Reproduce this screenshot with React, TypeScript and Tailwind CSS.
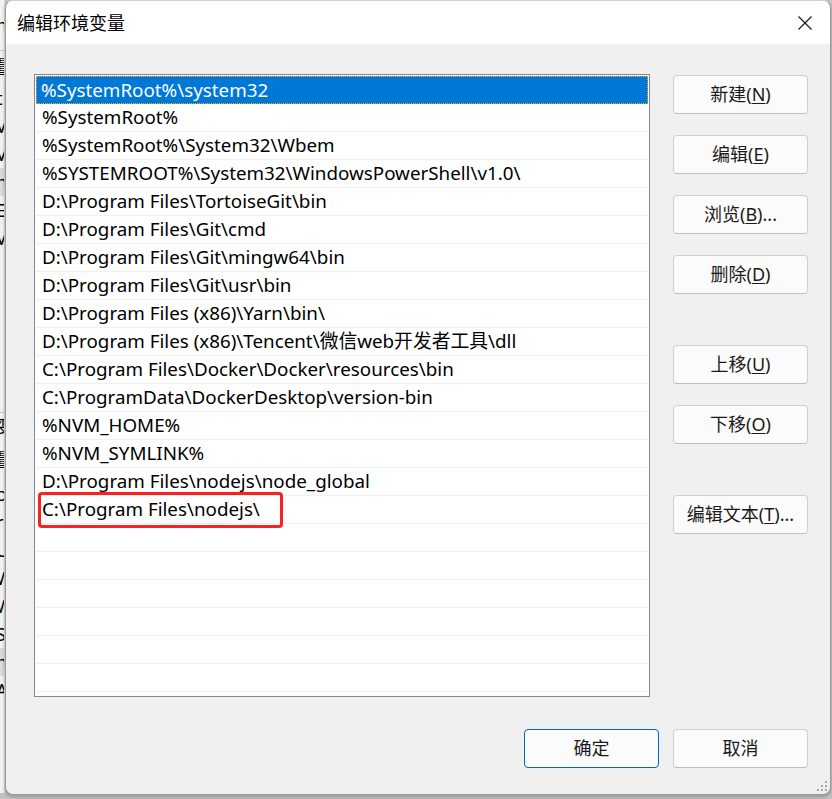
import React from "react";

const paths = [
    "%SystemRoot%\\system32",
    "%SystemRoot%",
    "%SystemRoot%\\System32\\Wbem",
    "%SYSTEMROOT%\\System32\\WindowsPowerShell\\v1.0\\",
    "D:\\Program Files\\TortoiseGit\\bin",
    "D:\\Program Files\\Git\\cmd",
    "D:\\Program Files\\Git\\mingw64\\bin",
    "D:\\Program Files\\Git\\usr\\bin",
    "D:\\Program Files (x86)\\Yarn\\bin\\",
    "D:\\Program Files (x86)\\Tencent\\微信web开发者工具\\dll",
    "C:\\Program Files\\Docker\\Docker\\resources\\bin",
    "C:\\ProgramData\\DockerDesktop\\version-bin",
    "%NVM_HOME%",
    "%NVM_SYMLINK%",
    "D:\\Program Files\\nodejs\\node_global",
    "C:\\Program Files\\nodejs\\",
];

// fragments of the window lying behind the dialog
const behind = [
    { h: "h-[50px]", t: "n", cls: "items-center" },
    { h: "h-[34px]", t: "量", cls: "items-center border-t border-[#c8c8c8]" },
    { h: "h-[28px]", t: "t", cls: "items-center" },
    { h: "h-[28px]", t: "V", cls: "items-center" },
    { h: "h-[28px]", t: "V", cls: "items-center" },
    { h: "h-[28px]", t: "nt", cls: "items-center bg-[#dcdcdc]" },
    { h: "h-[28px]", t: "EI", cls: "items-center" },
    { h: "h-[28px]", t: "V", cls: "items-center" },
    { h: "h-[160px]", t: "", cls: "items-center" },
    { h: "h-[28px]", t: "变", cls: "items-center border-t border-[#c8c8c8]" },
    { h: "h-[40px]", t: "量", cls: "items-center" },
    { h: "h-[28px]", t: "o", cls: "items-center" },
    { h: "h-[28px]", t: "ri", cls: "items-center" },
    { h: "h-[28px]", t: "U", cls: "items-center text-[#0066cc]" },
    { h: "h-[28px]", t: "W", cls: "items-center" },
    { h: "h-[28px]", t: "W", cls: "items-center" },
    { h: "h-[28px]", t: "S", cls: "items-center" },
    { h: "h-[28px]", t: "nt", cls: "items-center bg-[#dcdcdc]" },
    { h: "h-[28px]", t: "A", cls: "items-center" },
];

function Btn({ label, accel, tail = "", primary = false }: { label: string; accel?: string; tail?: string; primary?: boolean }) {
    return (
        <button
            className={
                primary
                    ? "w-[135px] h-[39px] shrink-0 rounded-[4px] border border-[#0067c0] bg-[#fbfbfb] text-[18px] text-[#1a1a1a]"
                    : "w-[135px] h-[39px] shrink-0 rounded-[4px] border border-[#d0d0d0] border-b-[#bdbdbd] bg-[#fbfbfb] text-[18px] text-[#1a1a1a]"
            }
        >
            {label}
            {accel && (
                <>
                    (<span className="underline underline-offset-2">{accel}</span>){tail}
                </>
            )}
        </button>
    );
}

export default function App() {
    return (
        <div className="w-[832px] h-[799px] flex bg-[#c4c4c4] overflow-hidden font-['Noto_Sans','Noto_Sans_CJK_SC',sans-serif]">
            {/* background window strip */}
            <div className="w-[5px] h-[793px] shrink-0 bg-[#f3f3f3] flex flex-col overflow-hidden border-r border-[#d8d8d8]">
                {behind.map((b, i) => (
                    <div key={i} className={`${b.h} shrink-0 flex ${b.cls} text-[18px] text-black -ml-[4px] whitespace-nowrap`}>
                        {b.t}
                    </div>
                ))}
            </div>

            {/* dialog */}
            <div className="w-[826px] h-[795px] shrink-0 flex flex-col rounded-[8px] bg-[#f0f0f0] overflow-hidden border border-[#9a9a9a] border-t-[#d0d0d0] shadow-[0_2px_4px_rgba(0,0,0,0.25)]">
                {/* title bar */}
                <div className="h-[43px] shrink-0 bg-white flex items-center justify-between pl-[11px] pr-[17px]">
                    <span className="text-[18px] text-black leading-none pt-[1px]">编辑环境变量</span>
                    <svg width="14" height="14" viewBox="0 0 14 14" className="mr-[1px]">
                        <path d="M0.5 0.5 L13.5 13.5 M13.5 0.5 L0.5 13.5" stroke="#1a1a1a" strokeWidth="1.2" />
                    </svg>
                </div>

                {/* body */}
                <div className="flex-1 flex flex-col pl-[28px] pt-[30px]">
                    <div className="flex gap-[23px]">
                        {/* list */}
                        <div className="relative w-[616px] h-[623px] shrink-0 border border-[#828790] bg-white p-[1px] overflow-hidden">
                            {Array.from({ length: 23 }).map((_, i) => {
                                const text = paths[i] ?? "";
                                const selected = i === 0;
                                return (
                                    <div
                                        key={i}
                                        className={
                                            selected
                                                ? "h-[28px] flex items-center px-[5px] bg-[#0078d7] text-white text-[18.8px] whitespace-nowrap outline outline-1 outline-dotted outline-[#f5a623] -outline-offset-1"
                                                : "h-[28px] flex items-center px-[6px] border-b border-[#f0f0f0] text-black text-[18.8px] whitespace-nowrap"
                                        }
                                    >
                                        {text}
                                    </div>
                                );
                            })}
                            {/* annotation */}
                            <div className="absolute left-[3px] top-[417px] w-[245px] h-[36px] border-[3px] border-[#fb2121] rounded-[4px]" />
                        </div>

                        {/* side buttons */}
                        <div className="flex flex-col pt-[1px]">
                            <div className="flex flex-col gap-[21px]">
                                <Btn label="新建" accel="N" />
                                <Btn label="编辑" accel="E" />
                                <Btn label="浏览" accel="B" tail="..." />
                                <Btn label="删除" accel="D" />
                            </div>
                            <div className="flex flex-col gap-[21px] mt-[51px]">
                                <Btn label="上移" accel="U" />
                                <Btn label="下移" accel="O" />
                            </div>
                            <div className="mt-[51px]">
                                <Btn label="编辑文本" accel="T" tail="..." />
                            </div>
                        </div>
                    </div>

                    {/* bottom buttons */}
                    <div className="flex justify-end gap-[14px] pr-[22px] mt-[32px]">
                        <Btn label="确定" primary />
                        <Btn label="取消" />
                    </div>

                    {/* resize grip */}
                    <div className="flex justify-end pr-[1px] mt-auto pb-[1px]">
                        <svg width="12" height="12" viewBox="0 0 12 12">
                            <rect x="8" y="0" width="2" height="2" fill="#a8a8a8" />
                            <rect x="4" y="4" width="2" height="2" fill="#a8a8a8" />
                            <rect x="8" y="4" width="2" height="2" fill="#a8a8a8" />
                            <rect x="0" y="8" width="2" height="2" fill="#a8a8a8" />
                            <rect x="4" y="8" width="2" height="2" fill="#a8a8a8" />
                            <rect x="8" y="8" width="2" height="2" fill="#a8a8a8" />
                        </svg>
                    </div>
                </div>
            </div>
        </div>
    );
}
